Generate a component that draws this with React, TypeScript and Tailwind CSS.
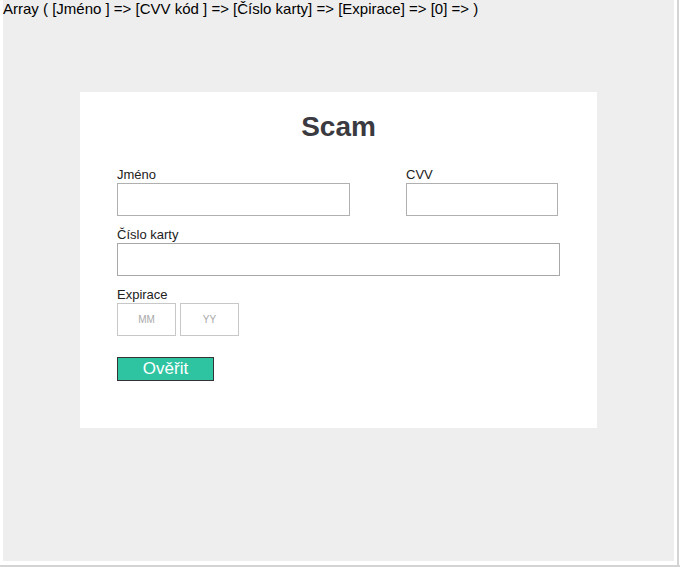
export default function App() {
  const font = { fontFamily: '"Liberation Sans", Arial, sans-serif' };
  return (
    <div className="w-[680px] h-[567px] bg-white relative overflow-hidden" style={font}>
      <div className="absolute right-[1px] top-0 w-[2px] h-[567px] bg-[#d4d4d4]" />
      <div className="absolute left-0 bottom-0 w-[680px] h-[2px] bg-[#d4d4d4]" />
      <div className="ml-[3px] w-[671px] h-[561px] bg-[#eeeeee] flex flex-col">
        <div className="text-[15px] leading-[17px] text-black">
          Array ( [Jméno ] =&gt; [CVV kód ] =&gt; [Číslo karty] =&gt; [Expirace] =&gt; [0] =&gt; )
        </div>
        <div className="ml-[77px] mt-[75px] w-[517px] h-[336px] bg-white pl-[37px] pt-[14px]">
          <h1 className="text-[28px] leading-[42px] font-bold text-[#3a3a40] text-center pr-[37px]">Scam</h1>
          <div className="mt-[19px] flex">
            <div className="flex flex-col">
              <label className="text-[13px] leading-[16px] text-[#222]">Jméno</label>
              <div className="w-[233px] h-[33px] border border-[#b0b0b0]" />
            </div>
            <div className="flex flex-col ml-[56px]">
              <label className="text-[13px] leading-[16px] text-[#222]">CVV</label>
              <div className="w-[152px] h-[33px] border border-[#b0b0b0]" />
            </div>
          </div>
          <div className="mt-[11px] flex flex-col">
            <label className="text-[13px] leading-[16px] text-[#222]">Číslo karty</label>
            <div className="w-[443px] h-[33px] border border-[#a8a8a8]" />
          </div>
          <div className="mt-[11px] flex flex-col">
            <label className="text-[13px] leading-[16px] text-[#222]">Expirace</label>
            <div className="flex gap-[4px]">
              <div className="w-[59px] h-[33px] border border-[#c8c8c8] flex items-center justify-center text-[10px] text-[#a8a8a8]">MM</div>
              <div className="w-[59px] h-[33px] border border-[#c8c8c8] flex items-center justify-center text-[10px] text-[#a8a8a8]">YY</div>
            </div>
          </div>
          <div className="mt-[21px] w-[97px] h-[24px] bg-[#2ec4a2] border border-[#333] text-white text-[17px] leading-[20px] flex items-center justify-center">
            Ověřit
          </div>
        </div>
      </div>
    </div>
  );
}
